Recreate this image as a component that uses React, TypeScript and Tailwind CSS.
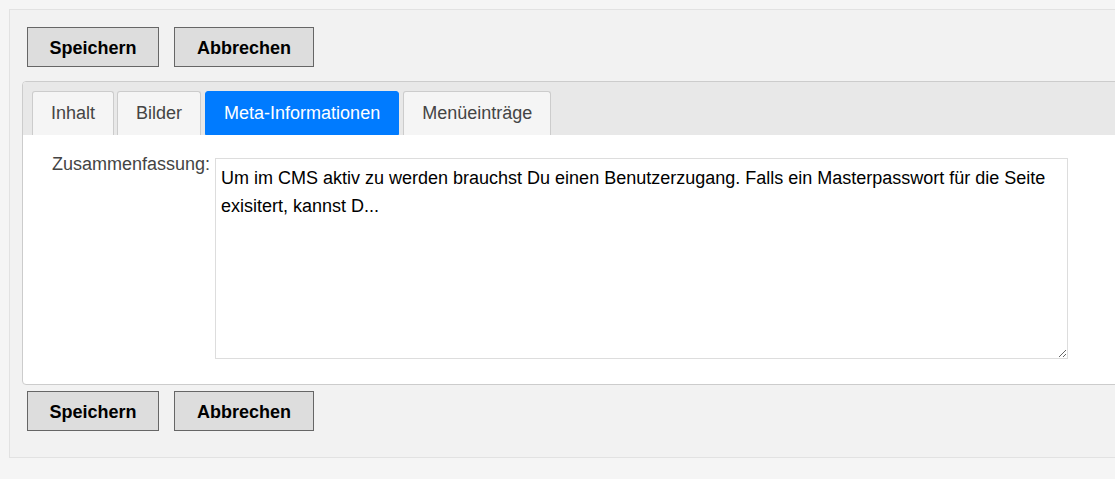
import React from "react";

const font = { fontFamily: '"Liberation Sans", Arial, sans-serif' };

function Btn({ children, w }: { children: React.ReactNode; w: string }) {
  return (
    <button
      className={
        w +
        " h-[40px] border border-[#666666] bg-[#dddddd] text-[18px] font-bold text-black leading-none flex items-center justify-center pt-[1px]"
      }
    >
      {children}
    </button>
  );
}

function Tab({ label, active, extra }: { label: string; active?: boolean; extra?: string }) {
  return (
    <div
      className={
        (active
          ? "h-[44px] px-[18px] flex items-center border border-[#007bff] bg-[#007bff] text-white text-[18px] rounded-t-[3px]"
          : "h-[44px] px-[18px] flex items-center border border-b-0 border-[#cccccc] bg-[#f5f5f5] text-[#444444] text-[18px] rounded-t-[3px]") +
        (extra ? " " + extra : "")
      }
    >
      {label}
    </div>
  );
}

export default function App() {
  return (
    <div className="w-[1115px] h-[479px] overflow-hidden bg-[#f5f5f5]" style={font}>
      <div className="ml-[9px] mt-[9px] w-[1200px] border border-[#e2e2e2] bg-[#f2f2f2] pt-[17px] pl-[12px] pb-[26px]">
        <div className="flex gap-[15px] ml-[5px]">
          <Btn w="w-[132px]">Speichern</Btn>
          <Btn w="w-[140px]">Abbrechen</Btn>
        </div>
        <div className="mt-[14px] w-[1150px] border border-[#cccccc] rounded-[4px] bg-white overflow-hidden">
          <div className="flex gap-[4px] bg-[#e8e8e8] pt-[9px] pl-[9px]">
            <Tab label="Inhalt" extra="mr-[-1px]" />
            <Tab label="Bilder" />
            <Tab label="Meta-Informationen" active />
            <Tab label="Menüeinträge" />
          </div>
          <div className="flex pt-[19px] pb-[25px]">
            <div className="w-[187px] text-right text-[18px] text-[#444444] leading-[21px]">
              Zusammenfassung:
            </div>
            <textarea
              className="ml-[5px] w-[853px] h-[201px] mt-[4px] border border-[#dddddd] bg-white px-[5px] py-[5px] text-[18px] leading-[28px] text-black resize-y"
              style={font}
              defaultValue="Um im CMS aktiv zu werden brauchst Du einen Benutzerzugang. Falls ein Masterpasswort für die Seite exisitert, kannst D..."
            />
          </div>
        </div>
        <div className="flex gap-[15px] ml-[5px] mt-[6px]">
          <Btn w="w-[132px]">Speichern</Btn>
          <Btn w="w-[140px]">Abbrechen</Btn>
        </div>
      </div>
    </div>
  );
}
